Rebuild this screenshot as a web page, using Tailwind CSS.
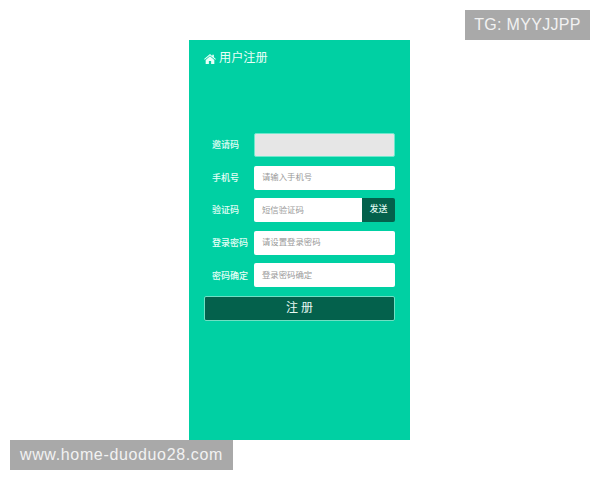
<!DOCTYPE html>
<html lang="zh">
<head>
  <meta charset="UTF-8">
  <title>用户注册</title>
  <script src="https://cdn.jsdelivr.net/npm/@tailwindcss/browser@4"></script>
</head>
<body class="bg-white w-[600px] h-[480px] overflow-hidden relative pt-[40px] pl-[189px] font-['Liberation_Sans','Noto_Sans_CJK_SC',sans-serif]">

  <!-- watermarks -->
  <div class="absolute right-[10px] top-[10px] w-[125px] h-[30px] bg-[#a9a9a9] text-[#f2f2f2] text-[16px] tracking-[0.3px] flex items-center justify-center">TG: MYYJJPP</div>
  <div class="absolute left-[10px] top-[440px] w-[223px] h-[30px] bg-[#a9a9a9] text-[#f2f2f2] text-[16px] tracking-[0.65px] flex items-center justify-center z-10">www.home-duoduo28.com</div>

  <div class="w-[221px] h-[400px] bg-[#00d0a3]">
    <div class="flex items-center h-[37px] pl-[15px] gap-[3px] text-[#e8fff8] text-[12.2px]">
      <svg class="w-[12px] h-[10px]" viewBox="0 0 26 22" fill="currentColor"><path d="M13 0 0 11l1.300 1.600L13 3.300l11.700 9.300L26 11l-4.500-3.800V1.500h-3.500v2.800zM3.500 13V22h7v-6.500h5V22h7v-9L13 5z"/></svg>
      <span>用户注册</span>
    </div>

    <div class="mt-[56px] px-[15px] flex flex-col gap-[8.6px]">
      <div class="flex items-center h-[24px]">
        <label class="w-[50px] pl-[8px] pt-[2px] whitespace-nowrap text-[9px] font-medium text-[#e6fff7]">邀请码</label>
        <div class="flex-1 h-[24px] bg-[#e6e6e6] rounded-[2px] border border-[#6fe8cc]"></div>
      </div>
      <div class="flex items-center h-[24px]">
        <label class="w-[50px] pl-[8px] pt-[2px] whitespace-nowrap text-[9px] font-medium text-[#e6fff7]">手机号</label>
        <div class="flex-1 h-[24px] bg-white rounded-[2px] pl-[8px] flex items-center text-[8.4px] text-[#999999]">请输入手机号</div>
      </div>
      <div class="flex items-center h-[24px]">
        <label class="w-[50px] pl-[8px] pt-[2px] whitespace-nowrap text-[9px] font-medium text-[#e6fff7]">验证码</label>
        <div class="w-[108px] h-[24px] bg-white rounded-l-[2px] pl-[8px] flex items-center text-[8.4px] text-[#999999]">短信验证码</div>
        <button class="flex-1 h-[24px] bg-[#04614c] rounded-r-[2px] text-[9px] font-medium text-[#dff5ee]">发送</button>
      </div>
      <div class="flex items-center h-[24px]">
        <label class="w-[50px] pl-[8px] pt-[2px] whitespace-nowrap text-[9px] font-medium text-[#e6fff7]">登录密码</label>
        <div class="flex-1 h-[24px] bg-white rounded-[2px] pl-[8px] flex items-center text-[8.4px] text-[#999999]">请设置登录密码</div>
      </div>
      <div class="flex items-center h-[24px]">
        <label class="w-[50px] pl-[8px] pt-[2px] whitespace-nowrap text-[9px] font-medium text-[#e6fff7]">密码确定</label>
        <div class="flex-1 h-[24px] bg-white rounded-[2px] pl-[8px] flex items-center text-[8.4px] text-[#999999]">登录密码确定</div>
      </div>
      <button class="h-[25px] pl-[3px] bg-[#04614c] border border-[#6fe0c4] rounded-[2px] text-[12px] text-[#e8f8f3] tracking-[3px]">注册</button>
    </div>
  </div>

</body>
</html>
